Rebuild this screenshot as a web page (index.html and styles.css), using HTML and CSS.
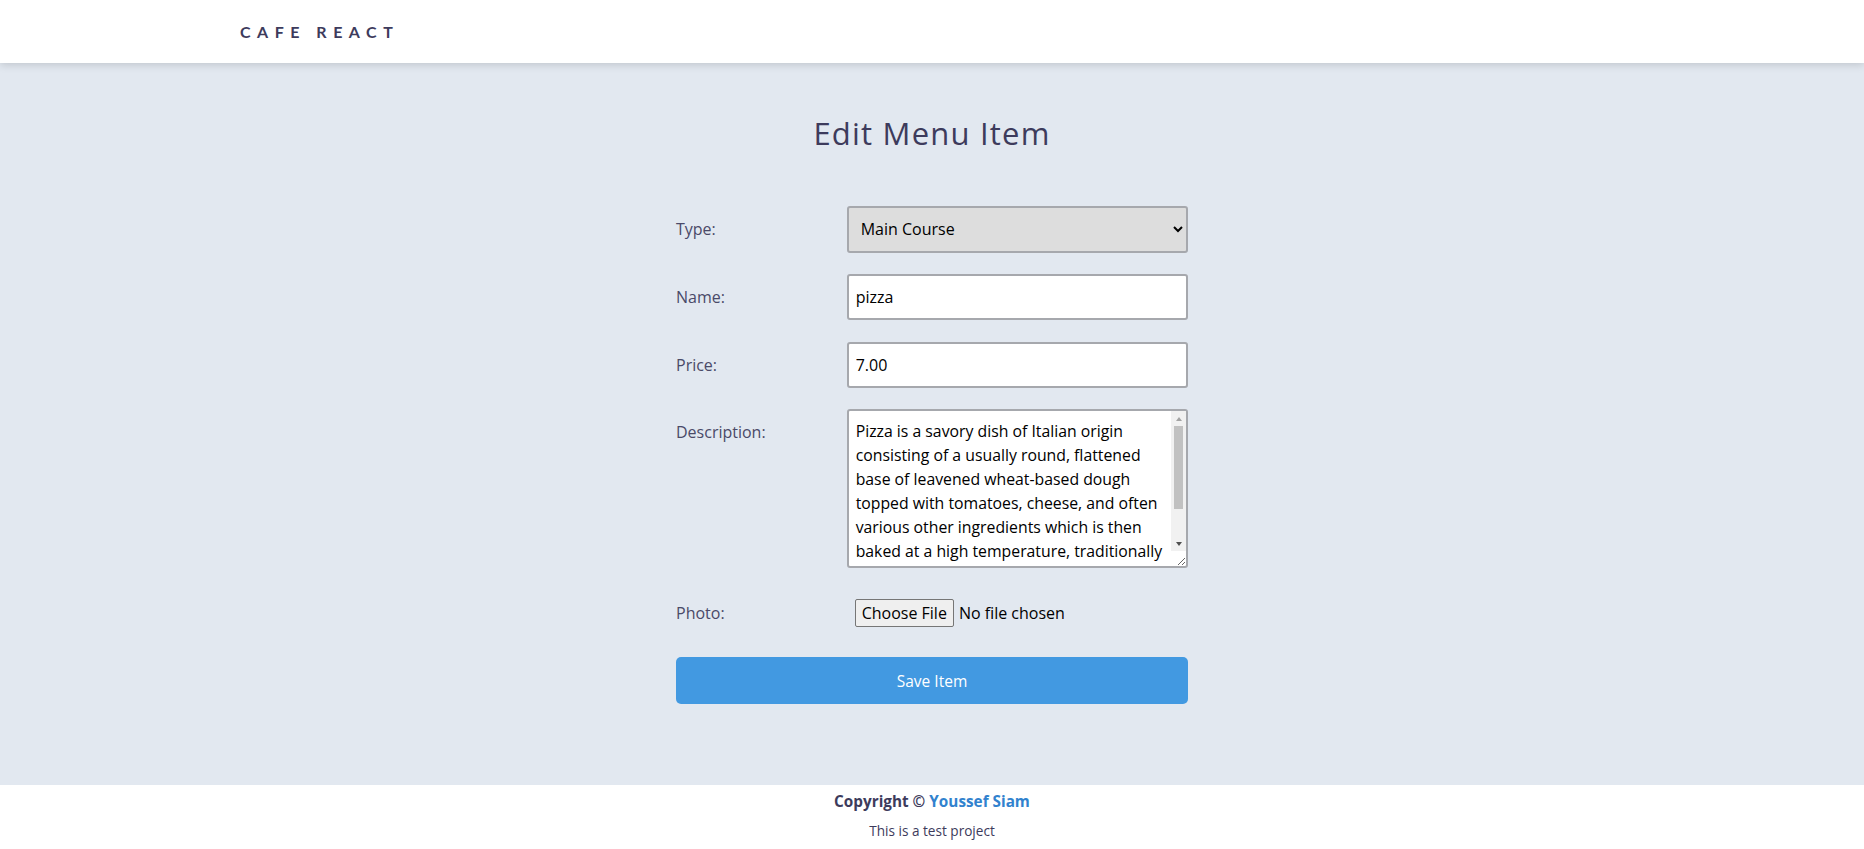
FILE: index.html
```html
<!DOCTYPE html>
<html lang="en">
<head>
<meta charset="utf-8">
<title>Cafe React</title>
<link rel="stylesheet" href="styles.css">
</head>
<body>
<div class="app">
  <header class="topbar">
    <div class="brand">CAFE REACT</div>
  </header>
  <main class="page">
    <h1 class="title">Edit Menu Item</h1>
    <form class="form">
      <div class="row">
        <label class="label" for="type">Type:</label>
        <select class="field select" id="type">
          <option>Main Course</option>
          <option>Dessert</option>
          <option>Drink</option>
        </select>
      </div>
      <div class="row">
        <label class="label" for="name">Name:</label>
        <input class="field" id="name" type="text" value="pizza">
      </div>
      <div class="row">
        <label class="label" for="price">Price:</label>
        <input class="field" id="price" type="text" value="7.00">
      </div>
      <div class="row row-top">
        <label class="label" for="desc">Description:</label>
        <div class="area-wrap">
          <textarea class="field area" id="desc">Pizza is a savory dish of Italian origin consisting of a usually round, flattened base of leavened wheat-based dough topped with tomatoes, cheese, and often various other ingredients which is then baked at a high temperature, traditionally in a wood-fired oven. A small pizza is sometimes called a pizzetta. A person who makes pizza is known as a pizzaiolo.</textarea>
          <div class="scrollbar" aria-hidden="true">
            <span class="sb-btn"><span class="arrow arrow-up"></span></span>
            <span class="thumb"></span>
            <span class="track-fill"></span>
            <span class="sb-btn"><span class="arrow arrow-down"></span></span>
          </div>
        </div>
      </div>
      <div class="row">
        <label class="label" for="photo">Photo:</label>
        <input class="file" id="photo" type="file">
      </div>
      <button class="save" type="button">Save Item</button>
    </form>
  </main>
  <footer class="footer">
    <p class="copy">Copyright © <a class="author" href="#">Youssef Siam</a></p>
    <p class="note">This is a test project</p>
  </footer>
</div>
</body>
</html>
```
FILE: styles.css
```css
* { box-sizing: border-box; }
html, body { margin: 0; padding: 0; }
body {
  font-family: "Open Sans", "Noto Sans", sans-serif;
  color: #3d3b5c;
  background: #e2e8f0;
}
.app {
  min-height: 100vh;
  display: flex;
  flex-direction: column;
}
.topbar {
  height: 63px;
  background: #ffffff;
  box-shadow: 0 2px 8px rgba(0, 0, 0, 0.15);
  display: flex;
  align-items: center;
  padding-left: 240px;
  position: relative;
  z-index: 1;
}
.brand {
  font-family: Lato, sans-serif;
  font-weight: 700;
  font-size: 16px;
  letter-spacing: 6.5px;
  color: #3d3b5c;
}
.page {
  flex: 1;
  padding-top: 46px;
}
.title {
  margin: 0 0 49px;
  text-align: center;
  font-weight: 400;
  font-size: 31px;
  line-height: 48px;
  letter-spacing: 1.2px;
  color: #3d3b5c;
}
.form {
  width: 512px;
  margin: 0 auto;
  display: flex;
  flex-direction: column;
  gap: 21.3px;
}
.row {
  display: grid;
  grid-template-columns: 1fr 2fr;
  align-items: center;
  min-height: 46.5px;
}
.row-top { align-items: start; }
.label {
  font-size: 16px;
  line-height: 24px;
  color: #4a4a68;
}
.row-top .label { padding-top: 11px; }
.field {
  width: 100%;
  height: 46.5px;
  font-family: inherit;
  font-size: 16px;
  line-height: 24px;
  color: #000;
  background: #fff;
  border: 2px solid #a6a8ad;
  border-radius: 3px;
  padding: 0 7px;
}
.select {
  background: #dddddd;
  padding: 0 8px;
}
.area-wrap {
  position: relative;
}
.area {
  height: 159px;
  font-size: 15.8px;
  padding: 8px 18px 4px 7px;
  resize: vertical;
  display: block;
  overflow: hidden;
}
.scrollbar {
  position: absolute;
  top: 2px;
  right: 2px;
  bottom: 17px;
  width: 15px;
  background: #f1f1f1;
  display: flex;
  flex-direction: column;
  align-items: center;
}
.sb-btn {
  width: 15px;
  height: 15px;
  flex: none;
  display: flex;
  align-items: center;
  justify-content: center;
}
.arrow {
  width: 0;
  height: 0;
  border-left: 3.5px solid transparent;
  border-right: 3.5px solid transparent;
}
.arrow-up { border-bottom: 4px solid #a3a3a3; }
.arrow-down { border-top: 4px solid #505050; }
.thumb {
  width: 9px;
  height: 83px;
  background: #c1c1c1;
  flex: none;
}
.track-fill { flex: 1; }
.file {
  font-family: inherit;
  font-size: 16px;
  color: #000;
  margin-left: 8px;
}
.file::file-selector-button {
  font: inherit;
  line-height: 22px;
  padding: 2px 6px;
  margin-right: 5px;
  color: #000;
  background: #efefef;
  border: 1px solid #767676;
  border-radius: 2px;
}
.save {
  height: 47px;
  width: 100%;
  border: none;
  border-radius: 5px;
  background: #4299e1;
  color: #ffffff;
  font-family: inherit;
  font-size: 15.5px;
}
.footer {
  height: 64px;
  background: #ffffff;
  text-align: center;
  padding-top: 6px;
}
.copy {
  margin: 0;
  font-size: 15.3px;
  line-height: 20px;
  font-weight: 700;
  color: #3d3b5c;
}
.author {
  color: #3182ce;
  text-decoration: none;
}
.note {
  margin: 10px 0 0;
  font-size: 13.6px;
  line-height: 20px;
  color: #3d3b5c;
}
```
